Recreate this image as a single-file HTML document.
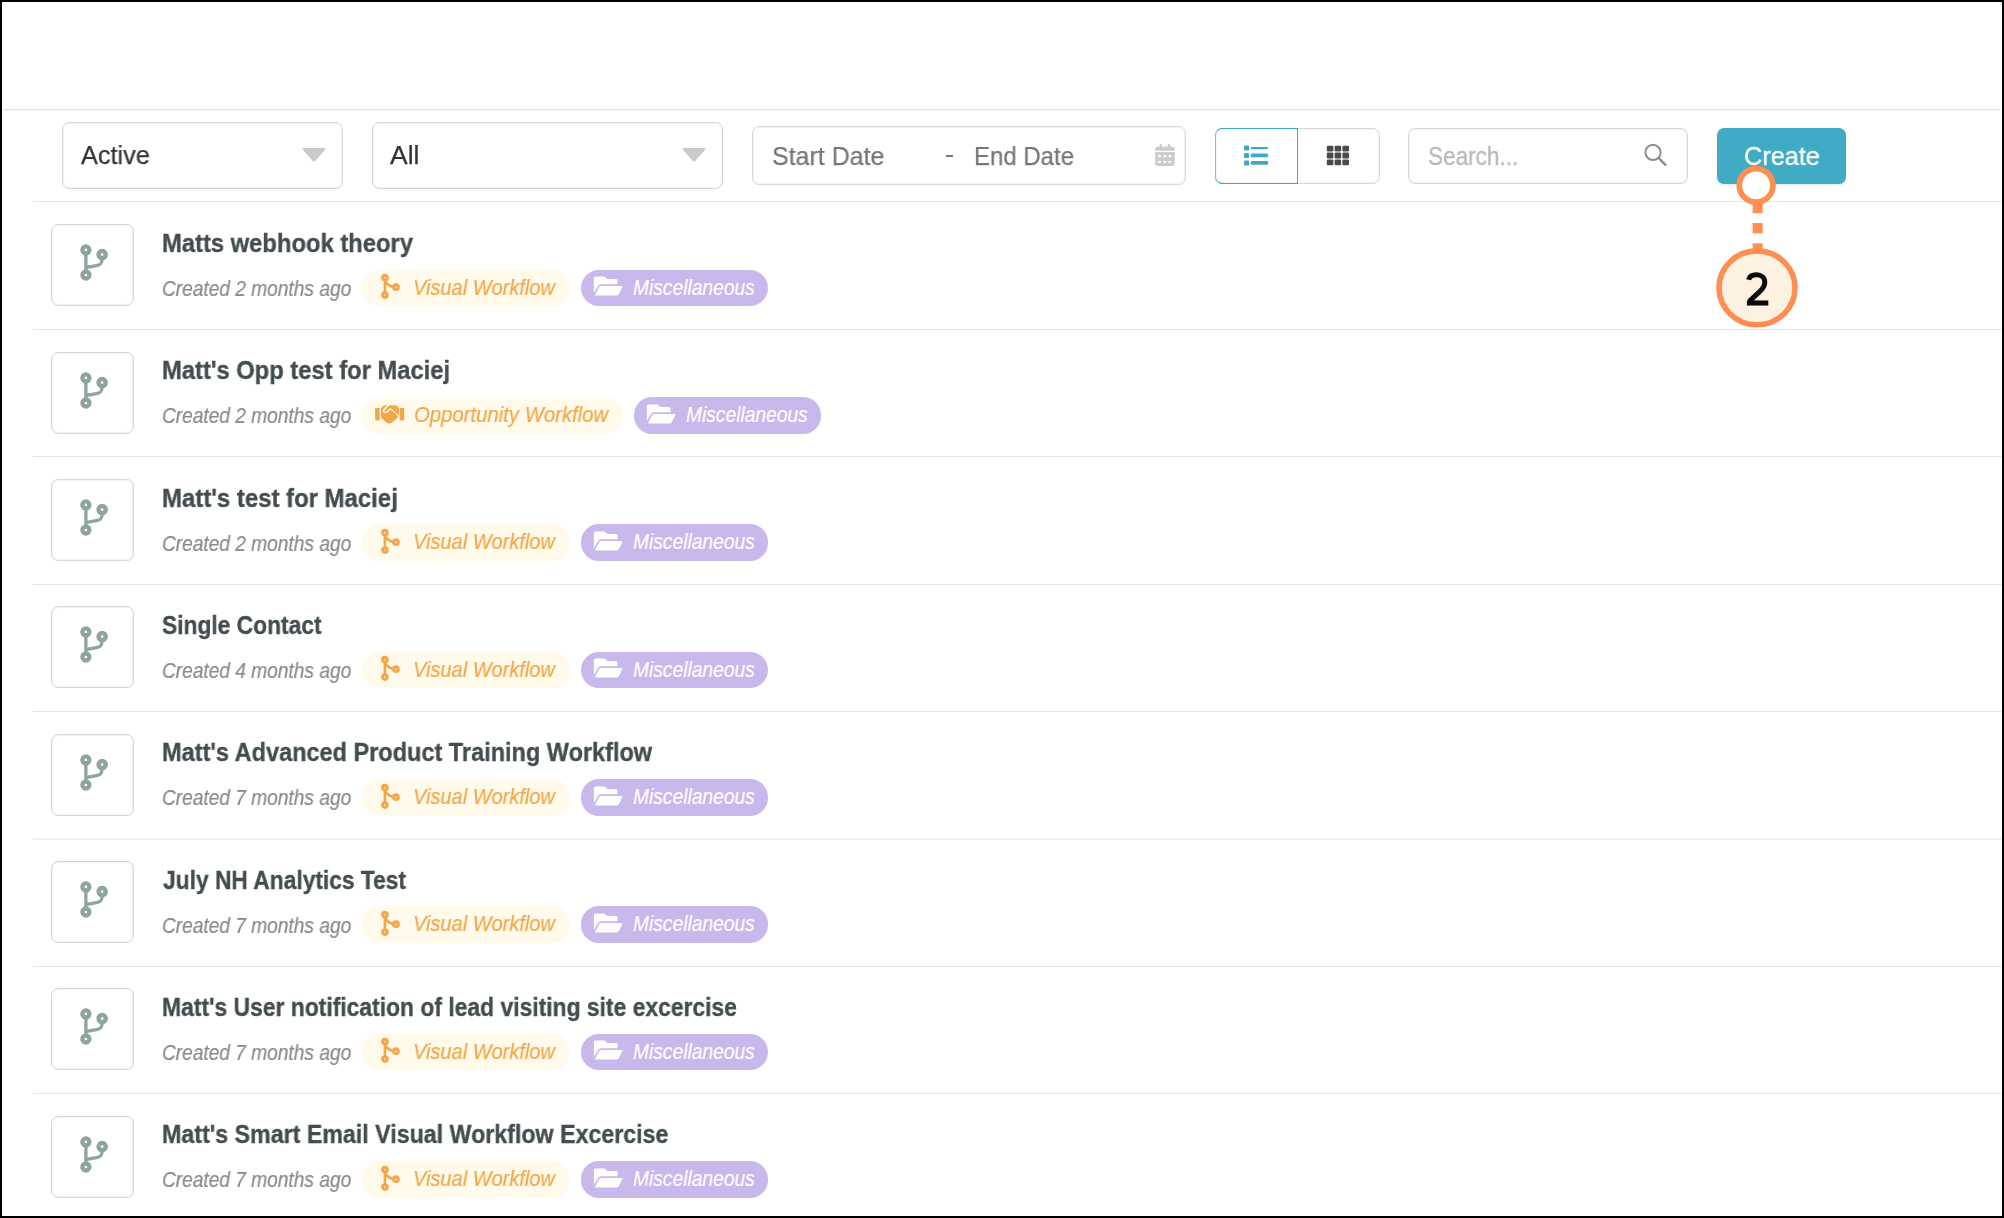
<!DOCTYPE html>
<html><head><meta charset="utf-8"><title>Workflows</title>
<style>
html,body{margin:0;padding:0;}
body{width:2004px;height:1218px;background:#000;position:relative;overflow:hidden;font-family:'Liberation Sans', sans-serif;}
.a{position:absolute;}
.t{position:absolute;white-space:pre;font-family:'Liberation Sans', sans-serif;will-change:transform;}
</style></head><body>
<div class="a" style="left:2.00px;top:2.00px;width:2000.00px;height:1214.00px;background:#fff"></div>
<div class="a" style="left:3.00px;top:109.00px;width:1998.00px;height:1.00px;background:#e3e3e3"></div>
<div class="a" style="left:3.00px;top:110.00px;width:1998.00px;height:1.00px;background:#f6f6f6"></div>
<div class="a" style="left:62.00px;top:122.00px;width:281.00px;height:67.00px;border:1px solid #d8d8d8;border-radius:7px;box-sizing:border-box;box-shadow:inset 0 0 0 1px #f4f4f4"></div>
<div class="a" style="left:372.00px;top:122.00px;width:350.50px;height:67.00px;border:1px solid #d8d8d8;border-radius:7px;box-sizing:border-box;box-shadow:inset 0 0 0 1px #f4f4f4"></div>
<svg class="a" style="left:301.2px;top:146.9px" width="26" height="16" viewBox="0 0 26 16"><path d="M2.6 1 H23.4 Q25.4 1 24.2 2.6 L14.3 13.9 Q13 15.3 11.7 13.9 L1.8 2.6 Q0.6 1 2.6 1Z" fill="#cacaca"/></svg>
<svg class="a" style="left:681px;top:146.9px" width="26" height="16" viewBox="0 0 26 16"><path d="M2.6 1 H23.4 Q25.4 1 24.2 2.6 L14.3 13.9 Q13 15.3 11.7 13.9 L1.8 2.6 Q0.6 1 2.6 1Z" fill="#cacaca"/></svg>
<div class="a" style="left:751.50px;top:126.00px;width:434.50px;height:59.00px;border:1px solid #d8d8d8;border-radius:7px;box-sizing:border-box;box-shadow:inset 0 0 0 1px #f4f4f4"></div>
<div class="a" style="left:945.50px;top:155.00px;width:7.50px;height:2.00px;background:#7a7a7a"></div>
<svg class="a" style="left:1155px;top:143px" width="20" height="24" viewBox="0 0 20 24"><rect x="4.4" y="1.1" width="2.7" height="4" rx="1.3" fill="#cccccc"/><rect x="12.6" y="1.1" width="2.7" height="4" rx="1.3" fill="#cccccc"/><path d="M0.2 6 Q0.2 3.8 2.4 3.8 H17.5 Q19.7 3.8 19.7 6 V7.8 H0.2Z" fill="#cccccc"/><path d="M0.2 9.1 H19.7 V20.8 Q19.7 22.9 17.6 22.9 H2.3 Q0.2 22.9 0.2 20.8Z" fill="#cccccc"/><g fill="#fff"><rect x="3.1" y="12.2" width="2.7" height="2"/><rect x="8.5" y="12.2" width="2.7" height="2"/><rect x="13.6" y="12.2" width="2.7" height="2"/><rect x="3.1" y="17.9" width="2.7" height="2"/><rect x="8.5" y="17.9" width="2.7" height="2"/><rect x="13.6" y="17.9" width="2.7" height="2"/></g></svg>
<div class="a" style="left:1214.50px;top:128.00px;width:165.50px;height:56.00px;border:1px solid #d8d8d8;border-radius:7px;box-sizing:border-box;box-shadow:inset 0 0 0 1px #f4f4f4"></div>
<div class="a" style="left:1214.50px;top:128.00px;width:83.50px;height:56.00px;border:1px solid #3ea9c2;border-left-color:#7cc5d6;border-radius:7px 0 0 7px;box-sizing:border-box"></div>
<svg class="a" style="left:1243px;top:144px" width="27" height="22" viewBox="0 0 27 22"><g fill="#3ea9c2"><rect x="1" y="1.5" width="5" height="5" rx="0.8"/><rect x="1" y="9" width="5" height="5" rx="0.8"/><rect x="1" y="16.5" width="5" height="5" rx="0.8"/><rect x="7.6" y="2.9" width="17.4" height="2.3" rx="1.15"/><rect x="7.6" y="9.5" width="17.6" height="3.7" rx="1.6"/><rect x="7.6" y="17.1" width="17.6" height="3.7" rx="1.6"/></g></svg>
<svg class="a" style="left:1326px;top:145px" width="24" height="21" viewBox="0 0 24 21"><g fill="#4a4a4a"><rect x="0.8" y="0.7" width="6.6" height="5.8" rx="1.2"/><rect x="8.6" y="0.7" width="6.6" height="5.8" rx="1.2"/><rect x="16.4" y="0.7" width="6.6" height="5.8" rx="1.2"/><rect x="0.8" y="7.6" width="6.6" height="5.8" rx="1.2"/><rect x="8.6" y="7.6" width="6.6" height="5.8" rx="1.2"/><rect x="16.4" y="7.6" width="6.6" height="5.8" rx="1.2"/><rect x="0.8" y="14.5" width="6.6" height="5.8" rx="1.2"/><rect x="8.6" y="14.5" width="6.6" height="5.8" rx="1.2"/><rect x="16.4" y="14.5" width="6.6" height="5.8" rx="1.2"/></g></svg>
<div class="a" style="left:1407.50px;top:128.00px;width:280.50px;height:56.00px;border:1px solid #d8d8d8;border-radius:7px;box-sizing:border-box;box-shadow:inset 0 0 0 1px #f4f4f4"></div>
<svg class="a" style="left:1640px;top:141px" width="30" height="30" viewBox="0 0 30 30"><circle cx="13" cy="11.4" r="7.6" fill="none" stroke="#8a8a8a" stroke-width="1.9"/><path d="M18.6 17 L25.4 23.8" stroke="#8a8a8a" stroke-width="2.4" stroke-linecap="round"/></svg>
<div class="a" style="left:1716.50px;top:128.00px;width:129.50px;height:56.00px;background:#3fabc4;border-radius:7px;box-shadow:0 2px 2px rgba(0,0,0,0.07)"></div>
<div class="a" style="left:33.00px;top:201.00px;width:1969.00px;height:1.00px;background:#e5e5e5"></div>
<div class="a" style="left:51.00px;top:224.20px;width:83.00px;height:82.00px;border:1px solid #d8d8d8;border-radius:7px;box-sizing:border-box;box-shadow:inset 0 0 0 1px #f4f4f4"></div>
<svg class="a" style="left:75.8px;top:242.20px" width="40" height="40" viewBox="0 0 40 40"><g fill="none" stroke="#8fa39f" stroke-width="3.3" stroke-linecap="round"><circle cx="9.9" cy="7.9" r="3.5" stroke-width="4.3"/><circle cx="26.16" cy="12.6" r="3.6" stroke-width="4.4"/><circle cx="9.9" cy="33.0" r="3.5" stroke-width="4.3"/><path d="M9.9 11 V30"/><path d="M26.16 16.5 C26.1 21.5 24.5 23 20.5 23.6 L10.5 25.4"/></g></svg>
<div class="a" style="left:362.00px;top:269.70px;width:207.50px;height:36.60px;background:#fffaea;border-radius:18px"></div>
<svg class="a" style="left:380.00px;top:273.30px" width="22" height="28" viewBox="0 0 22 28"><g fill="none" stroke="#f2a74b" stroke-width="2.6"><circle cx="4.9" cy="4.7" r="2.3" stroke-width="3.1"/><circle cx="16" cy="14.2" r="2.3" stroke-width="3.1"/><circle cx="4.9" cy="22.1" r="2.3" stroke-width="3.1"/><path d="M4.9 7.3 V19.5"/><path d="M5.2 8.6 Q8.5 13.2 13.4 13.9"/></g></svg>
<div class="a" style="left:580.70px;top:269.70px;width:187.10px;height:36.60px;background:#c9b8ec;border-radius:18px"></div>
<svg class="a" style="left:593.00px;top:276.40px" width="30" height="21" viewBox="0 0 30 21"><path d="M0.9 2 Q0.9 0.5 2.4 0.5 H11.4 L14.3 3.1 H23 Q24.5 3.1 24.5 4.6 V8.3 H7.6 Q6 8.3 5.2 9.8 L0.9 17 Z" fill="#fff"/><path d="M7.6 10 H28.6 Q29.8 10 29.3 11.2 L25.6 18.4 Q24.9 19.5 23.6 19.5 H2.8 Q1.6 19.5 2.2 18.4 L6.2 10.9 Q6.7 10 7.6 10 Z" fill="#fff"/></svg>
<div class="a" style="left:33.00px;top:329.00px;width:1969.00px;height:1.00px;background:#e5e5e5"></div>
<div class="a" style="left:51.00px;top:351.54px;width:83.00px;height:82.00px;border:1px solid #d8d8d8;border-radius:7px;box-sizing:border-box;box-shadow:inset 0 0 0 1px #f4f4f4"></div>
<svg class="a" style="left:75.8px;top:369.54px" width="40" height="40" viewBox="0 0 40 40"><g fill="none" stroke="#8fa39f" stroke-width="3.3" stroke-linecap="round"><circle cx="9.9" cy="7.9" r="3.5" stroke-width="4.3"/><circle cx="26.16" cy="12.6" r="3.6" stroke-width="4.4"/><circle cx="9.9" cy="33.0" r="3.5" stroke-width="4.3"/><path d="M9.9 11 V30"/><path d="M26.16 16.5 C26.1 21.5 24.5 23 20.5 23.6 L10.5 25.4"/></g></svg>
<div class="a" style="left:362.00px;top:397.04px;width:261.00px;height:36.60px;background:#fffaea;border-radius:18px"></div>
<svg class="a" style="left:375.00px;top:404.74px" width="30" height="19" viewBox="0 0 30 19"><g fill="#f2a74b"><rect x="0.1" y="3" width="4.6" height="12.4" rx="0.8"/><rect x="24.6" y="3" width="4.6" height="12.4" rx="0.8"/><path d="M6 3.2 Q7.5 0.5 10.5 0.2 H12.5 L8.2 4.2 Q7 6.5 9.3 7.8 Q10.8 8.6 12.6 7.3 L15.6 4.6 L22.5 10.4 Q23.6 11.5 22.6 12.6 Q22 14.2 20.3 14.6 Q19.8 16.5 17.5 16.8 Q16.5 18.4 14.8 18.3 Q13 18.9 11.6 17.8 L6 12.4Z"/><path d="M14.5 0.2 H19.8 Q21.5 0.3 22.5 1.5 L24 3.3 V10.6 L23.4 10.2 L16 3.5 Q15.2 2.9 14.4 3.5 L11.2 6.6 Q10.2 7.2 9.5 6.4 Q9 5.7 9.7 4.9Z"/></g></svg>
<div class="a" style="left:633.80px;top:397.04px;width:187.60px;height:36.60px;background:#c9b8ec;border-radius:18px"></div>
<svg class="a" style="left:646.10px;top:403.74px" width="30" height="21" viewBox="0 0 30 21"><path d="M0.9 2 Q0.9 0.5 2.4 0.5 H11.4 L14.3 3.1 H23 Q24.5 3.1 24.5 4.6 V8.3 H7.6 Q6 8.3 5.2 9.8 L0.9 17 Z" fill="#fff"/><path d="M7.6 10 H28.6 Q29.8 10 29.3 11.2 L25.6 18.4 Q24.9 19.5 23.6 19.5 H2.8 Q1.6 19.5 2.2 18.4 L6.2 10.9 Q6.7 10 7.6 10 Z" fill="#fff"/></svg>
<div class="a" style="left:33.00px;top:456.00px;width:1969.00px;height:1.00px;background:#e5e5e5"></div>
<div class="a" style="left:51.00px;top:478.88px;width:83.00px;height:82.00px;border:1px solid #d8d8d8;border-radius:7px;box-sizing:border-box;box-shadow:inset 0 0 0 1px #f4f4f4"></div>
<svg class="a" style="left:75.8px;top:496.88px" width="40" height="40" viewBox="0 0 40 40"><g fill="none" stroke="#8fa39f" stroke-width="3.3" stroke-linecap="round"><circle cx="9.9" cy="7.9" r="3.5" stroke-width="4.3"/><circle cx="26.16" cy="12.6" r="3.6" stroke-width="4.4"/><circle cx="9.9" cy="33.0" r="3.5" stroke-width="4.3"/><path d="M9.9 11 V30"/><path d="M26.16 16.5 C26.1 21.5 24.5 23 20.5 23.6 L10.5 25.4"/></g></svg>
<div class="a" style="left:362.00px;top:524.38px;width:207.50px;height:36.60px;background:#fffaea;border-radius:18px"></div>
<svg class="a" style="left:380.00px;top:527.98px" width="22" height="28" viewBox="0 0 22 28"><g fill="none" stroke="#f2a74b" stroke-width="2.6"><circle cx="4.9" cy="4.7" r="2.3" stroke-width="3.1"/><circle cx="16" cy="14.2" r="2.3" stroke-width="3.1"/><circle cx="4.9" cy="22.1" r="2.3" stroke-width="3.1"/><path d="M4.9 7.3 V19.5"/><path d="M5.2 8.6 Q8.5 13.2 13.4 13.9"/></g></svg>
<div class="a" style="left:580.70px;top:524.38px;width:187.10px;height:36.60px;background:#c9b8ec;border-radius:18px"></div>
<svg class="a" style="left:593.00px;top:531.08px" width="30" height="21" viewBox="0 0 30 21"><path d="M0.9 2 Q0.9 0.5 2.4 0.5 H11.4 L14.3 3.1 H23 Q24.5 3.1 24.5 4.6 V8.3 H7.6 Q6 8.3 5.2 9.8 L0.9 17 Z" fill="#fff"/><path d="M7.6 10 H28.6 Q29.8 10 29.3 11.2 L25.6 18.4 Q24.9 19.5 23.6 19.5 H2.8 Q1.6 19.5 2.2 18.4 L6.2 10.9 Q6.7 10 7.6 10 Z" fill="#fff"/></svg>
<div class="a" style="left:33.00px;top:584.00px;width:1969.00px;height:1.00px;background:#e5e5e5"></div>
<div class="a" style="left:51.00px;top:606.22px;width:83.00px;height:82.00px;border:1px solid #d8d8d8;border-radius:7px;box-sizing:border-box;box-shadow:inset 0 0 0 1px #f4f4f4"></div>
<svg class="a" style="left:75.8px;top:624.22px" width="40" height="40" viewBox="0 0 40 40"><g fill="none" stroke="#8fa39f" stroke-width="3.3" stroke-linecap="round"><circle cx="9.9" cy="7.9" r="3.5" stroke-width="4.3"/><circle cx="26.16" cy="12.6" r="3.6" stroke-width="4.4"/><circle cx="9.9" cy="33.0" r="3.5" stroke-width="4.3"/><path d="M9.9 11 V30"/><path d="M26.16 16.5 C26.1 21.5 24.5 23 20.5 23.6 L10.5 25.4"/></g></svg>
<div class="a" style="left:362.00px;top:651.72px;width:207.50px;height:36.60px;background:#fffaea;border-radius:18px"></div>
<svg class="a" style="left:380.00px;top:655.32px" width="22" height="28" viewBox="0 0 22 28"><g fill="none" stroke="#f2a74b" stroke-width="2.6"><circle cx="4.9" cy="4.7" r="2.3" stroke-width="3.1"/><circle cx="16" cy="14.2" r="2.3" stroke-width="3.1"/><circle cx="4.9" cy="22.1" r="2.3" stroke-width="3.1"/><path d="M4.9 7.3 V19.5"/><path d="M5.2 8.6 Q8.5 13.2 13.4 13.9"/></g></svg>
<div class="a" style="left:580.70px;top:651.72px;width:187.10px;height:36.60px;background:#c9b8ec;border-radius:18px"></div>
<svg class="a" style="left:593.00px;top:658.42px" width="30" height="21" viewBox="0 0 30 21"><path d="M0.9 2 Q0.9 0.5 2.4 0.5 H11.4 L14.3 3.1 H23 Q24.5 3.1 24.5 4.6 V8.3 H7.6 Q6 8.3 5.2 9.8 L0.9 17 Z" fill="#fff"/><path d="M7.6 10 H28.6 Q29.8 10 29.3 11.2 L25.6 18.4 Q24.9 19.5 23.6 19.5 H2.8 Q1.6 19.5 2.2 18.4 L6.2 10.9 Q6.7 10 7.6 10 Z" fill="#fff"/></svg>
<div class="a" style="left:33.00px;top:711.00px;width:1969.00px;height:1.00px;background:#e5e5e5"></div>
<div class="a" style="left:51.00px;top:733.56px;width:83.00px;height:82.00px;border:1px solid #d8d8d8;border-radius:7px;box-sizing:border-box;box-shadow:inset 0 0 0 1px #f4f4f4"></div>
<svg class="a" style="left:75.8px;top:751.56px" width="40" height="40" viewBox="0 0 40 40"><g fill="none" stroke="#8fa39f" stroke-width="3.3" stroke-linecap="round"><circle cx="9.9" cy="7.9" r="3.5" stroke-width="4.3"/><circle cx="26.16" cy="12.6" r="3.6" stroke-width="4.4"/><circle cx="9.9" cy="33.0" r="3.5" stroke-width="4.3"/><path d="M9.9 11 V30"/><path d="M26.16 16.5 C26.1 21.5 24.5 23 20.5 23.6 L10.5 25.4"/></g></svg>
<div class="a" style="left:362.00px;top:779.06px;width:207.50px;height:36.60px;background:#fffaea;border-radius:18px"></div>
<svg class="a" style="left:380.00px;top:782.66px" width="22" height="28" viewBox="0 0 22 28"><g fill="none" stroke="#f2a74b" stroke-width="2.6"><circle cx="4.9" cy="4.7" r="2.3" stroke-width="3.1"/><circle cx="16" cy="14.2" r="2.3" stroke-width="3.1"/><circle cx="4.9" cy="22.1" r="2.3" stroke-width="3.1"/><path d="M4.9 7.3 V19.5"/><path d="M5.2 8.6 Q8.5 13.2 13.4 13.9"/></g></svg>
<div class="a" style="left:580.70px;top:779.06px;width:187.10px;height:36.60px;background:#c9b8ec;border-radius:18px"></div>
<svg class="a" style="left:593.00px;top:785.76px" width="30" height="21" viewBox="0 0 30 21"><path d="M0.9 2 Q0.9 0.5 2.4 0.5 H11.4 L14.3 3.1 H23 Q24.5 3.1 24.5 4.6 V8.3 H7.6 Q6 8.3 5.2 9.8 L0.9 17 Z" fill="#fff"/><path d="M7.6 10 H28.6 Q29.8 10 29.3 11.2 L25.6 18.4 Q24.9 19.5 23.6 19.5 H2.8 Q1.6 19.5 2.2 18.4 L6.2 10.9 Q6.7 10 7.6 10 Z" fill="#fff"/></svg>
<div class="a" style="left:33.00px;top:838.00px;width:1969.00px;height:1.00px;background:#f0f0f0"></div>
<div class="a" style="left:33.00px;top:839.00px;width:1969.00px;height:1.00px;background:#f0f0f0"></div>
<div class="a" style="left:51.00px;top:860.90px;width:83.00px;height:82.00px;border:1px solid #d8d8d8;border-radius:7px;box-sizing:border-box;box-shadow:inset 0 0 0 1px #f4f4f4"></div>
<svg class="a" style="left:75.8px;top:878.90px" width="40" height="40" viewBox="0 0 40 40"><g fill="none" stroke="#8fa39f" stroke-width="3.3" stroke-linecap="round"><circle cx="9.9" cy="7.9" r="3.5" stroke-width="4.3"/><circle cx="26.16" cy="12.6" r="3.6" stroke-width="4.4"/><circle cx="9.9" cy="33.0" r="3.5" stroke-width="4.3"/><path d="M9.9 11 V30"/><path d="M26.16 16.5 C26.1 21.5 24.5 23 20.5 23.6 L10.5 25.4"/></g></svg>
<div class="a" style="left:362.00px;top:906.40px;width:207.50px;height:36.60px;background:#fffaea;border-radius:18px"></div>
<svg class="a" style="left:380.00px;top:910.00px" width="22" height="28" viewBox="0 0 22 28"><g fill="none" stroke="#f2a74b" stroke-width="2.6"><circle cx="4.9" cy="4.7" r="2.3" stroke-width="3.1"/><circle cx="16" cy="14.2" r="2.3" stroke-width="3.1"/><circle cx="4.9" cy="22.1" r="2.3" stroke-width="3.1"/><path d="M4.9 7.3 V19.5"/><path d="M5.2 8.6 Q8.5 13.2 13.4 13.9"/></g></svg>
<div class="a" style="left:580.70px;top:906.40px;width:187.10px;height:36.60px;background:#c9b8ec;border-radius:18px"></div>
<svg class="a" style="left:593.00px;top:913.10px" width="30" height="21" viewBox="0 0 30 21"><path d="M0.9 2 Q0.9 0.5 2.4 0.5 H11.4 L14.3 3.1 H23 Q24.5 3.1 24.5 4.6 V8.3 H7.6 Q6 8.3 5.2 9.8 L0.9 17 Z" fill="#fff"/><path d="M7.6 10 H28.6 Q29.8 10 29.3 11.2 L25.6 18.4 Q24.9 19.5 23.6 19.5 H2.8 Q1.6 19.5 2.2 18.4 L6.2 10.9 Q6.7 10 7.6 10 Z" fill="#fff"/></svg>
<div class="a" style="left:33.00px;top:966.00px;width:1969.00px;height:1.00px;background:#e5e5e5"></div>
<div class="a" style="left:51.00px;top:988.24px;width:83.00px;height:82.00px;border:1px solid #d8d8d8;border-radius:7px;box-sizing:border-box;box-shadow:inset 0 0 0 1px #f4f4f4"></div>
<svg class="a" style="left:75.8px;top:1006.24px" width="40" height="40" viewBox="0 0 40 40"><g fill="none" stroke="#8fa39f" stroke-width="3.3" stroke-linecap="round"><circle cx="9.9" cy="7.9" r="3.5" stroke-width="4.3"/><circle cx="26.16" cy="12.6" r="3.6" stroke-width="4.4"/><circle cx="9.9" cy="33.0" r="3.5" stroke-width="4.3"/><path d="M9.9 11 V30"/><path d="M26.16 16.5 C26.1 21.5 24.5 23 20.5 23.6 L10.5 25.4"/></g></svg>
<div class="a" style="left:362.00px;top:1033.74px;width:207.50px;height:36.60px;background:#fffaea;border-radius:18px"></div>
<svg class="a" style="left:380.00px;top:1037.34px" width="22" height="28" viewBox="0 0 22 28"><g fill="none" stroke="#f2a74b" stroke-width="2.6"><circle cx="4.9" cy="4.7" r="2.3" stroke-width="3.1"/><circle cx="16" cy="14.2" r="2.3" stroke-width="3.1"/><circle cx="4.9" cy="22.1" r="2.3" stroke-width="3.1"/><path d="M4.9 7.3 V19.5"/><path d="M5.2 8.6 Q8.5 13.2 13.4 13.9"/></g></svg>
<div class="a" style="left:580.70px;top:1033.74px;width:187.10px;height:36.60px;background:#c9b8ec;border-radius:18px"></div>
<svg class="a" style="left:593.00px;top:1040.44px" width="30" height="21" viewBox="0 0 30 21"><path d="M0.9 2 Q0.9 0.5 2.4 0.5 H11.4 L14.3 3.1 H23 Q24.5 3.1 24.5 4.6 V8.3 H7.6 Q6 8.3 5.2 9.8 L0.9 17 Z" fill="#fff"/><path d="M7.6 10 H28.6 Q29.8 10 29.3 11.2 L25.6 18.4 Q24.9 19.5 23.6 19.5 H2.8 Q1.6 19.5 2.2 18.4 L6.2 10.9 Q6.7 10 7.6 10 Z" fill="#fff"/></svg>
<div class="a" style="left:33.00px;top:1093.00px;width:1969.00px;height:1.00px;background:#e5e5e5"></div>
<div class="a" style="left:51.00px;top:1115.58px;width:83.00px;height:82.00px;border:1px solid #d8d8d8;border-radius:7px;box-sizing:border-box;box-shadow:inset 0 0 0 1px #f4f4f4"></div>
<svg class="a" style="left:75.8px;top:1133.58px" width="40" height="40" viewBox="0 0 40 40"><g fill="none" stroke="#8fa39f" stroke-width="3.3" stroke-linecap="round"><circle cx="9.9" cy="7.9" r="3.5" stroke-width="4.3"/><circle cx="26.16" cy="12.6" r="3.6" stroke-width="4.4"/><circle cx="9.9" cy="33.0" r="3.5" stroke-width="4.3"/><path d="M9.9 11 V30"/><path d="M26.16 16.5 C26.1 21.5 24.5 23 20.5 23.6 L10.5 25.4"/></g></svg>
<div class="a" style="left:362.00px;top:1161.08px;width:207.50px;height:36.60px;background:#fffaea;border-radius:18px"></div>
<svg class="a" style="left:380.00px;top:1164.68px" width="22" height="28" viewBox="0 0 22 28"><g fill="none" stroke="#f2a74b" stroke-width="2.6"><circle cx="4.9" cy="4.7" r="2.3" stroke-width="3.1"/><circle cx="16" cy="14.2" r="2.3" stroke-width="3.1"/><circle cx="4.9" cy="22.1" r="2.3" stroke-width="3.1"/><path d="M4.9 7.3 V19.5"/><path d="M5.2 8.6 Q8.5 13.2 13.4 13.9"/></g></svg>
<div class="a" style="left:580.70px;top:1161.08px;width:187.10px;height:36.60px;background:#c9b8ec;border-radius:18px"></div>
<svg class="a" style="left:593.00px;top:1167.78px" width="30" height="21" viewBox="0 0 30 21"><path d="M0.9 2 Q0.9 0.5 2.4 0.5 H11.4 L14.3 3.1 H23 Q24.5 3.1 24.5 4.6 V8.3 H7.6 Q6 8.3 5.2 9.8 L0.9 17 Z" fill="#fff"/><path d="M7.6 10 H28.6 Q29.8 10 29.3 11.2 L25.6 18.4 Q24.9 19.5 23.6 19.5 H2.8 Q1.6 19.5 2.2 18.4 L6.2 10.9 Q6.7 10 7.6 10 Z" fill="#fff"/></svg>
<div class="t" style="left:80.70px;top:143.21px;font-size:25.5px;line-height:25.5px;font-weight:normal;font-style:normal;color:#333333;transform:scaleX(0.9913);transform-origin:0 0;-webkit-text-stroke:0.25px #333333">Active</div>
<div class="t" style="left:390.00px;top:143.11px;font-size:25.5px;line-height:25.5px;font-weight:normal;font-style:normal;color:#333333;transform:scaleX(1.0370);transform-origin:0 0;-webkit-text-stroke:0.25px #333333">All</div>
<div class="t" style="left:772.32px;top:143.81px;font-size:25.5px;line-height:25.5px;font-weight:normal;font-style:normal;color:#777777;transform:scaleX(0.9796);transform-origin:0 0;-webkit-text-stroke:0.25px #777777">Start Date</div>
<div class="t" style="left:973.82px;top:143.81px;font-size:25.5px;line-height:25.5px;font-weight:normal;font-style:normal;color:#777777;transform:scaleX(0.9404);transform-origin:0 0;-webkit-text-stroke:0.25px #777777">End Date</div>
<div class="t" style="left:1427.82px;top:144.01px;font-size:25.5px;line-height:25.5px;font-weight:normal;font-style:normal;color:#b9b9b9;transform:scaleX(0.8848);transform-origin:0 0;-webkit-text-stroke:0.3px #b9b9b9">Search...</div>
<div class="t" style="left:1743.91px;top:143.71px;font-size:25.5px;line-height:25.5px;font-weight:normal;font-style:normal;color:#ffffff;transform:scaleX(0.9919);transform-origin:0 0;-webkit-text-stroke:0.3px #ffffff">Create</div>
<div class="t" style="left:161.76px;top:230.97px;font-size:25.2px;line-height:25.2px;font-weight:bold;font-style:normal;color:#434d4f;transform:scaleX(0.9438);transform-origin:0 0;-webkit-text-stroke:0.35px #434d4f">Matts webhook theory</div>
<div class="t" style="left:161.81px;top:277.82px;font-size:21.6px;line-height:21.6px;font-weight:normal;font-style:italic;color:#8a8a8a;transform:scaleX(0.8854);transform-origin:0 0;-webkit-text-stroke:0.2px #8a8a8a">Created 2 months ago</div>
<div class="t" style="left:412.95px;top:276.62px;font-size:21.6px;line-height:21.6px;font-weight:normal;font-style:italic;color:#f2a74b;transform:scaleX(0.9263);transform-origin:0 0;-webkit-text-stroke:0.2px #f2a74b">Visual Workflow</div>
<div class="t" style="left:632.81px;top:276.62px;font-size:21.6px;line-height:21.6px;font-weight:normal;font-style:italic;color:#ffffff;transform:scaleX(0.8904);transform-origin:0 0;-webkit-text-stroke:0.2px #ffffff">Miscellaneous</div>
<div class="t" style="left:161.76px;top:358.31px;font-size:25.2px;line-height:25.2px;font-weight:bold;font-style:normal;color:#434d4f;transform:scaleX(0.9429);transform-origin:0 0;-webkit-text-stroke:0.35px #434d4f">Matt's Opp test for Maciej</div>
<div class="t" style="left:161.81px;top:405.16px;font-size:21.6px;line-height:21.6px;font-weight:normal;font-style:italic;color:#8a8a8a;transform:scaleX(0.8854);transform-origin:0 0;-webkit-text-stroke:0.2px #8a8a8a">Created 2 months ago</div>
<div class="t" style="left:413.76px;top:403.96px;font-size:21.6px;line-height:21.6px;font-weight:normal;font-style:italic;color:#f2a74b;transform:scaleX(0.9406);transform-origin:0 0;-webkit-text-stroke:0.2px #f2a74b">Opportunity Workflow</div>
<div class="t" style="left:685.91px;top:403.96px;font-size:21.6px;line-height:21.6px;font-weight:normal;font-style:italic;color:#ffffff;transform:scaleX(0.8904);transform-origin:0 0;-webkit-text-stroke:0.2px #ffffff">Miscellaneous</div>
<div class="t" style="left:161.75px;top:485.65px;font-size:25.2px;line-height:25.2px;font-weight:bold;font-style:normal;color:#434d4f;transform:scaleX(0.9504);transform-origin:0 0;-webkit-text-stroke:0.35px #434d4f">Matt's test for Maciej</div>
<div class="t" style="left:161.81px;top:532.50px;font-size:21.6px;line-height:21.6px;font-weight:normal;font-style:italic;color:#8a8a8a;transform:scaleX(0.8854);transform-origin:0 0;-webkit-text-stroke:0.2px #8a8a8a">Created 2 months ago</div>
<div class="t" style="left:412.95px;top:531.30px;font-size:21.6px;line-height:21.6px;font-weight:normal;font-style:italic;color:#f2a74b;transform:scaleX(0.9263);transform-origin:0 0;-webkit-text-stroke:0.2px #f2a74b">Visual Workflow</div>
<div class="t" style="left:632.81px;top:531.30px;font-size:21.6px;line-height:21.6px;font-weight:normal;font-style:italic;color:#ffffff;transform:scaleX(0.8904);transform-origin:0 0;-webkit-text-stroke:0.2px #ffffff">Miscellaneous</div>
<div class="t" style="left:161.80px;top:612.99px;font-size:25.2px;line-height:25.2px;font-weight:bold;font-style:normal;color:#434d4f;transform:scaleX(0.9046);transform-origin:0 0;-webkit-text-stroke:0.35px #434d4f">Single Contact</div>
<div class="t" style="left:161.81px;top:659.84px;font-size:21.6px;line-height:21.6px;font-weight:normal;font-style:italic;color:#8a8a8a;transform:scaleX(0.8854);transform-origin:0 0;-webkit-text-stroke:0.2px #8a8a8a">Created 4 months ago</div>
<div class="t" style="left:412.95px;top:658.64px;font-size:21.6px;line-height:21.6px;font-weight:normal;font-style:italic;color:#f2a74b;transform:scaleX(0.9263);transform-origin:0 0;-webkit-text-stroke:0.2px #f2a74b">Visual Workflow</div>
<div class="t" style="left:632.81px;top:658.64px;font-size:21.6px;line-height:21.6px;font-weight:normal;font-style:italic;color:#ffffff;transform:scaleX(0.8904);transform-origin:0 0;-webkit-text-stroke:0.2px #ffffff">Miscellaneous</div>
<div class="t" style="left:161.77px;top:740.33px;font-size:25.2px;line-height:25.2px;font-weight:bold;font-style:normal;color:#434d4f;transform:scaleX(0.9332);transform-origin:0 0;-webkit-text-stroke:0.35px #434d4f">Matt's Advanced Product Training Workflow</div>
<div class="t" style="left:161.81px;top:787.18px;font-size:21.6px;line-height:21.6px;font-weight:normal;font-style:italic;color:#8a8a8a;transform:scaleX(0.8854);transform-origin:0 0;-webkit-text-stroke:0.2px #8a8a8a">Created 7 months ago</div>
<div class="t" style="left:412.95px;top:785.98px;font-size:21.6px;line-height:21.6px;font-weight:normal;font-style:italic;color:#f2a74b;transform:scaleX(0.9263);transform-origin:0 0;-webkit-text-stroke:0.2px #f2a74b">Visual Workflow</div>
<div class="t" style="left:632.81px;top:785.98px;font-size:21.6px;line-height:21.6px;font-weight:normal;font-style:italic;color:#ffffff;transform:scaleX(0.8904);transform-origin:0 0;-webkit-text-stroke:0.2px #ffffff">Miscellaneous</div>
<div class="t" style="left:162.70px;top:867.67px;font-size:25.2px;line-height:25.2px;font-weight:bold;font-style:normal;color:#434d4f;transform:scaleX(0.9045);transform-origin:0 0;-webkit-text-stroke:0.35px #434d4f">July NH Analytics Test</div>
<div class="t" style="left:161.81px;top:914.52px;font-size:21.6px;line-height:21.6px;font-weight:normal;font-style:italic;color:#8a8a8a;transform:scaleX(0.8854);transform-origin:0 0;-webkit-text-stroke:0.2px #8a8a8a">Created 7 months ago</div>
<div class="t" style="left:412.95px;top:913.32px;font-size:21.6px;line-height:21.6px;font-weight:normal;font-style:italic;color:#f2a74b;transform:scaleX(0.9263);transform-origin:0 0;-webkit-text-stroke:0.2px #f2a74b">Visual Workflow</div>
<div class="t" style="left:632.81px;top:913.32px;font-size:21.6px;line-height:21.6px;font-weight:normal;font-style:italic;color:#ffffff;transform:scaleX(0.8904);transform-origin:0 0;-webkit-text-stroke:0.2px #ffffff">Miscellaneous</div>
<div class="t" style="left:161.79px;top:995.01px;font-size:25.2px;line-height:25.2px;font-weight:bold;font-style:normal;color:#434d4f;transform:scaleX(0.9082);transform-origin:0 0;-webkit-text-stroke:0.35px #434d4f">Matt's User notification of lead visiting site excercise</div>
<div class="t" style="left:161.81px;top:1041.86px;font-size:21.6px;line-height:21.6px;font-weight:normal;font-style:italic;color:#8a8a8a;transform:scaleX(0.8854);transform-origin:0 0;-webkit-text-stroke:0.2px #8a8a8a">Created 7 months ago</div>
<div class="t" style="left:412.95px;top:1040.66px;font-size:21.6px;line-height:21.6px;font-weight:normal;font-style:italic;color:#f2a74b;transform:scaleX(0.9263);transform-origin:0 0;-webkit-text-stroke:0.2px #f2a74b">Visual Workflow</div>
<div class="t" style="left:632.81px;top:1040.66px;font-size:21.6px;line-height:21.6px;font-weight:normal;font-style:italic;color:#ffffff;transform:scaleX(0.8904);transform-origin:0 0;-webkit-text-stroke:0.2px #ffffff">Miscellaneous</div>
<div class="t" style="left:161.78px;top:1122.35px;font-size:25.2px;line-height:25.2px;font-weight:bold;font-style:normal;color:#434d4f;transform:scaleX(0.9215);transform-origin:0 0;-webkit-text-stroke:0.35px #434d4f">Matt's Smart Email Visual Workflow Excercise</div>
<div class="t" style="left:161.81px;top:1169.20px;font-size:21.6px;line-height:21.6px;font-weight:normal;font-style:italic;color:#8a8a8a;transform:scaleX(0.8854);transform-origin:0 0;-webkit-text-stroke:0.2px #8a8a8a">Created 7 months ago</div>
<div class="t" style="left:412.95px;top:1168.00px;font-size:21.6px;line-height:21.6px;font-weight:normal;font-style:italic;color:#f2a74b;transform:scaleX(0.9263);transform-origin:0 0;-webkit-text-stroke:0.2px #f2a74b">Visual Workflow</div>
<div class="t" style="left:632.81px;top:1168.00px;font-size:21.6px;line-height:21.6px;font-weight:normal;font-style:italic;color:#ffffff;transform:scaleX(0.8904);transform-origin:0 0;-webkit-text-stroke:0.2px #ffffff">Miscellaneous</div>
<svg class="a" style="left:1700px;top:160px" width="120" height="190" viewBox="1700 160 120 190"><g fill="#fe8e52"><rect x="1752.6" y="202" width="10" height="11.2"/><rect x="1752.6" y="223" width="10" height="10.3"/><rect x="1752.6" y="243.4" width="10" height="8"/></g><circle cx="1756.1" cy="185.4" r="16.8" fill="#ffffff" stroke="#fe8e52" stroke-width="5.8"/><ellipse cx="1757" cy="287.8" rx="38" ry="36.9" fill="#fdf1e1" stroke="#fe8e52" stroke-width="5.6"/></svg>
<svg class="a" style="left:1735px;top:262px" width="45" height="50" viewBox="0 0 45 50"><g fill="none" stroke="#0a0a0a" stroke-width="5"><path d="M13.7 17.8 C14.3 14.6 17.2 12.8 21.4 12.8 C26.4 12.8 29.8 16 29.8 20.4 C29.8 24.3 27.6 26.9 24.4 29.8 L14.2 39.4"/><path d="M11.9 41 H33.3" stroke-width="5.1"/></g></svg>
</body></html>
